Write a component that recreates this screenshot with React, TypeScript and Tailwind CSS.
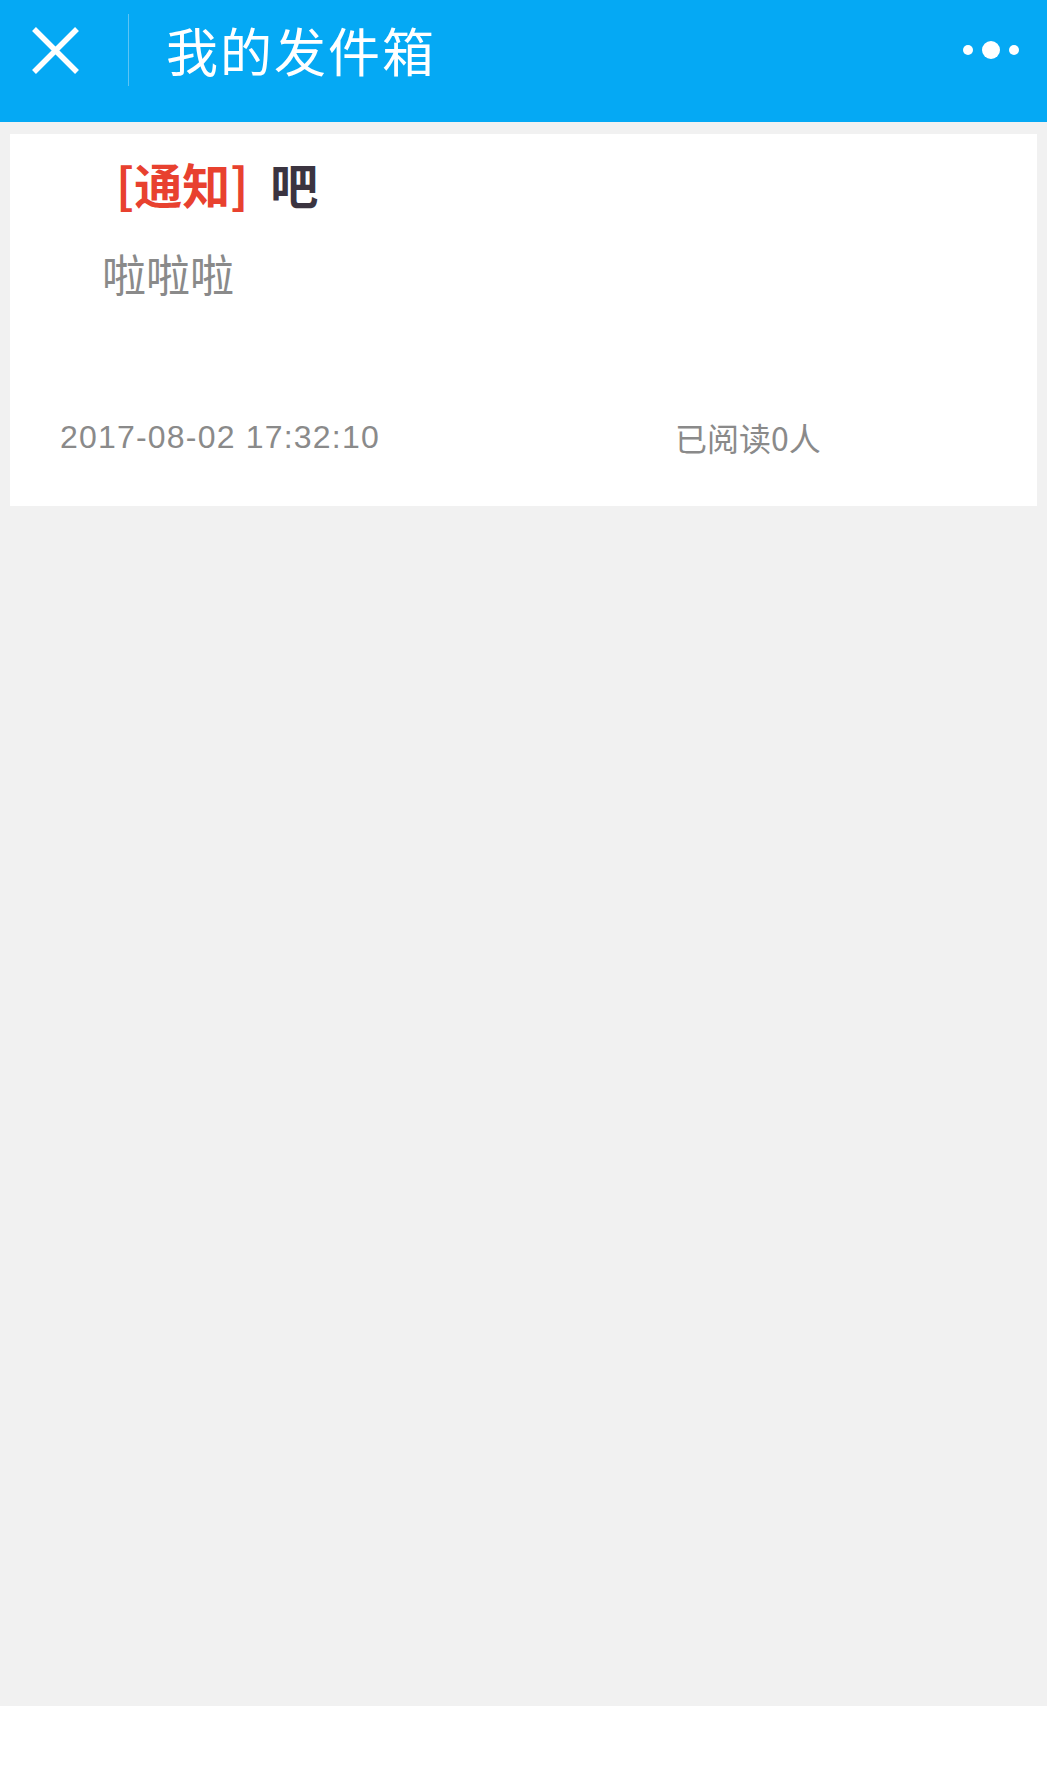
import React from "react";

const cjk = { fontFamily: '"Noto Sans CJK SC", "Noto Sans", sans-serif' };
const latin = { fontFamily: '"Liberation Sans", "Noto Sans CJK SC", sans-serif' };

export default function App() {
  return (
    <div className="w-[1047px] h-[1787px] flex flex-col bg-white" style={cjk}>
      <header className="h-[122px] bg-[#05a9f4] shrink-0">
        <div className="h-[100px] flex items-center">
          <div className="ml-[32px] w-[47px] h-[47px] flex items-center justify-center">
            <svg width="47" height="47" viewBox="0 0 47 47">
              <path d="M2 2 L45 45 M45 2 L2 45" stroke="#ffffff" strokeWidth="5.5" strokeLinecap="butt" />
            </svg>
          </div>
          <div className="ml-[49px] w-px h-[72px] bg-[#5cc4f5]" />
          <div className="ml-[37px] text-white text-[52px] leading-[60px] font-normal tracking-[2px]">我的发件箱</div>
          <div className="ml-auto mr-[28px] flex items-center">
            <svg width="56" height="20" viewBox="0 0 56 20">
              <circle cx="5" cy="10" r="5" fill="#ffffff" />
              <circle cx="28" cy="10" r="9" fill="#ffffff" />
              <circle cx="51" cy="10" r="5" fill="#ffffff" />
            </svg>
          </div>
        </div>
      </header>
      <main className="flex-1 bg-[#f1f1f1] pt-[12px] px-[10px]">
        <div className="bg-white h-[372px] pt-[21px] flex flex-col">
          <div className="pl-[106px] text-[48px] leading-[56px] font-bold flex items-center">
            <span className="text-[#e8412f]">[通知]</span>
            <span className="ml-[22px] text-[#3b3440]">吧</span>
          </div>
          <div className="mt-[36px] pl-[92px] text-[44px] leading-[52px] text-[#8a8a8a]">啦啦啦</div>
          <div className="mt-[118px] flex items-center text-[#8a8a8a] leading-[40px]">
            <span className="ml-[50px] text-[32px] tracking-[1.2px]" style={latin}>2017-08-02 17:32:10</span>
            <span className="ml-[295px] text-[32px]">已阅读0人</span>
          </div>
        </div>
      </main>
      <div className="h-[81px] bg-white shrink-0" />
    </div>
  );
}
